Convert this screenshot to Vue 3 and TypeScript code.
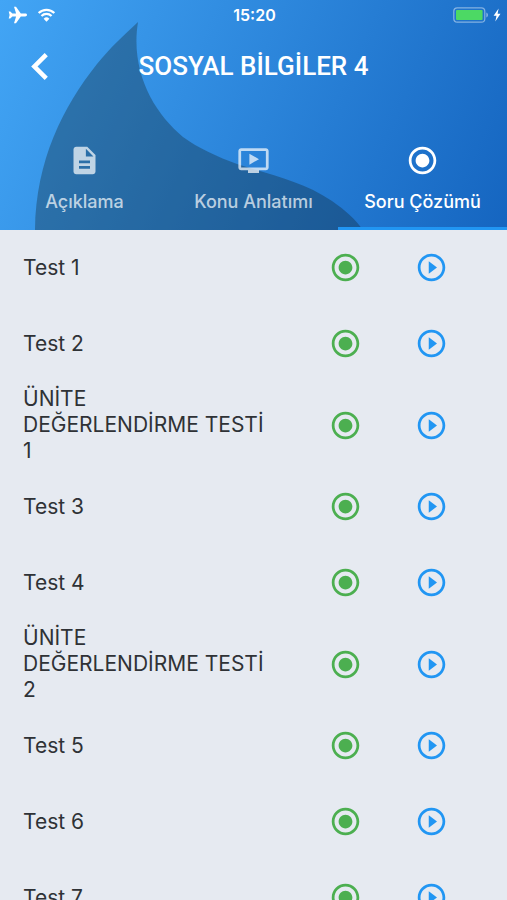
<script setup lang="ts">
import { ref } from 'vue'

interface Tab {
  id: string
  label: string
  icon: string
}

interface Lesson {
  id: number
  title: string
}

const icons = {
  description:
    'M14 2H6c-1.1 0-2 .9-2 2v16c0 1.1.9 2 2 2h12c1.1 0 2-.9 2-2V8l-6-6zm2 16H8v-2h8v2zm0-4H8v-2h8v2zm-3-5V3.5L18.5 9H13z',
  video:
    'M21 3H3c-1.11 0-2 .89-2 2v12c0 1.1.89 2 2 2h5v2h8v-2h5c1.1 0 2-.9 2-2V5c0-1.11-.9-2-2-2zm0 14H3V5h18v12zm-5-6l-7 4V7z',
  target:
    'M12 7c-2.76 0-5 2.24-5 5s2.24 5 5 5 5-2.24 5-5-2.24-5-5-5zm0-5C6.48 2 2 6.48 2 12s4.48 10 10 10 10-4.48 10-10S17.52 2 12 2zm0 18c-4.42 0-8-3.58-8-8s3.58-8 8-8 8 3.58 8 8-3.58 8-8 8z',
  play:
    'M10 16.5l6-4.5-6-4.5v9zM12 2C6.48 2 2 6.48 2 12s4.48 10 10 10 10-4.48 10-10S17.52 2 12 2zm0 18c-4.41 0-8-3.59-8-8s3.59-8 8-8 8 3.59 8 8-3.59 8-8 8z',
}

const tabs: Tab[] = [
  { id: 'description', label: 'Açıklama', icon: icons.description },
  { id: 'lecture', label: 'Konu Anlatımı', icon: icons.video },
  { id: 'questions', label: 'Soru Çözümü', icon: icons.target },
]

const activeTab = ref('questions')

const lessons: Lesson[] = [
  'Test 1',
  'Test 2',
  'ÜNİTE\nDEĞERLENDİRME TESTİ\n1',
  'Test 3',
  'Test 4',
  'ÜNİTE\nDEĞERLENDİRME TESTİ\n2',
  'Test 5',
  'Test 6',
  'Test 7',
].map((title, id) => ({ id, title }))
</script>

<template>
  <div class="app">
    <header class="header">
      <svg class="fin" viewBox="0 0 507 230" preserveAspectRatio="none" aria-hidden="true">
        <path
          d="M138 22C123 36 110 48 97 64C63 107 36 160 35 230H363C355 219 345 210 332 201C302 181 270 175 237 164C218 157 198 148 183 137C154 113 130 72 138 22Z"
        />
      </svg>

      <div class="status">
        <div class="status-side">
          <svg class="plane" viewBox="0 0 20 18" aria-hidden="true">
            <path
              d="M19 9c0-.9-.8-1.4-1.8-1.4h-4.4L8 .7H6l2.1 6.9H4.4L2.3 5.4H.7L1.6 9 .7 12.6h1.6l2.1-2.2h3.7L6 17.3h2l4.8-6.9h4.4c1 0 1.8-.5 1.8-1.4z"
            />
          </svg>
          <svg class="wifi" viewBox="0 0 20 15" aria-hidden="true">
            <path class="arc" d="M1.6 5.4a12 12 0 0 1 16.8 0M4.6 8.5a7.7 7.7 0 0 1 10.8 0" />
            <path d="M10 14.6l3.1-3.2a4.5 4.5 0 0 0-6.2 0z" />
          </svg>
        </div>
        <span class="clock">15:20</span>
        <div class="status-side end">
          <svg class="battery" viewBox="0 0 36 16" aria-hidden="true">
            <rect class="case" x="0.8" y="0.8" width="31" height="14.4" rx="3.5" />
            <rect class="charge" x="3" y="3" width="26.6" height="10" rx="1" />
            <path class="cap" d="M33.4 5.5c2 .8 2 4.2 0 5z" />
          </svg>
          <svg class="bolt" viewBox="0 0 8 14" aria-hidden="true">
            <path d="M5.6.5L.6 7.8h2.9L2.3 13.5l5.2-7.7H4.6z" />
          </svg>
        </div>
      </div>

      <div class="toolbar">
        <button class="back" type="button" aria-label="Geri">
          <svg viewBox="8 6 7.41 12" aria-hidden="true">
            <path d="M15.41 7.41L14 6l-6 6 6 6 1.41-1.41L10.83 12z" />
          </svg>
        </button>
        <h1>SOSYAL BİLGİLER 4</h1>
      </div>

      <div class="tabs" role="tablist">
        <button
          v-for="tab in tabs"
          :key="tab.id"
          class="tab"
          :class="{ active: tab.id === activeTab }"
          type="button"
          role="tab"
          :aria-selected="tab.id === activeTab"
          @click="activeTab = tab.id"
        >
          <svg class="icon" viewBox="0 0 24 24" aria-hidden="true"><path :d="tab.icon" /></svg>
          <span>{{ tab.label }}</span>
        </button>
      </div>
    </header>

    <ul class="list">
      <li v-for="lesson in lessons" :key="lesson.id" class="row">
        <span class="name">{{ lesson.title }}</span>
        <button class="action solve" type="button" aria-label="Testi çöz">
          <svg class="icon" viewBox="0 0 24 24" aria-hidden="true"><path :d="icons.target" /></svg>
        </button>
        <button class="action watch" type="button" aria-label="Videoyu izle">
          <svg class="icon" viewBox="0 0 24 24" aria-hidden="true"><path :d="icons.play" /></svg>
        </button>
      </li>
    </ul>
  </div>
</template>

<style>
body {
  margin: 0;
  background: #e6eaf1;
}
</style>

<style scoped>
.app {
  display: flex;
  flex-direction: column;
  height: 100vh;
  background: #e6eaf1;
  color: #2f3236;
  font-family: Inter, Roboto, sans-serif;
}

button {
  margin: 0;
  padding: 0;
  border: 0;
  background: none;
  color: inherit;
  font: inherit;
  cursor: pointer;
}

svg {
  display: block;
  fill: currentColor;
}

.icon {
  width: 33px;
  height: 33px;
}

.header {
  position: relative;
  flex: none;
  background: linear-gradient(114deg, #42a5f5, #1565c0);
  color: #fff;
}

.fin {
  position: absolute;
  inset: 0;
  width: 100%;
  height: 100%;
  fill: rgba(14, 30, 34, 0.32);
}

.status,
.toolbar,
.tabs {
  position: relative;
}

.status {
  display: grid;
  grid-template-columns: 1fr auto 1fr;
  align-items: center;
  height: 30px;
  padding: 0 6px 0 8px;
}

.status-side {
  display: flex;
  align-items: center;
  gap: 9px;
}

.status-side.end {
  justify-content: flex-end;
  gap: 4px;
}

.plane {
  width: 20px;
  height: 18px;
}

.wifi {
  width: 19px;
  height: 14px;
}

.arc {
  fill: none;
  stroke: currentColor;
  stroke-width: 2.4;
}

.clock {
  font-size: 16px;
  font-weight: 600;
  line-height: 20px;
}

.battery {
  width: 36px;
  height: 16px;
}

.case {
  fill: none;
  stroke: rgba(255, 255, 255, 0.45);
  stroke-width: 1.2;
}

.charge {
  fill: #4cd964;
}

.cap {
  fill: rgba(255, 255, 255, 0.5);
}

.bolt {
  width: 8px;
  height: 14px;
}

.toolbar {
  display: grid;
  grid-template-columns: 78px 1fr 78px;
  align-items: center;
  height: 72px;
}

.back {
  display: grid;
  place-items: center;
  height: 56px;
}

.back svg {
  width: 17px;
  height: 27px;
}

h1 {
  margin: 0;
  font-family: Roboto, Inter, sans-serif;
  font-size: 26px;
  font-weight: 500;
  line-height: 32px;
  text-align: center;
  white-space: nowrap;
}

.tabs {
  display: grid;
  grid-template-columns: repeat(3, 1fr);
  height: 128px;
}

.tab {
  display: flex;
  flex-direction: column;
  align-items: center;
  gap: 12px;
  padding-top: 42px;
  border-bottom: 3px solid transparent;
  color: rgba(255, 255, 255, 0.7);
  font-size: 18px;
  font-weight: 500;
  line-height: 26px;
}

.tab.active {
  border-bottom-color: #2196f3;
  color: #fff;
}

.list {
  flex: 1;
  min-height: 0;
  margin: -1px 0 0;
  padding: 0;
  overflow-y: auto;
  scrollbar-width: none;
  list-style: none;
}

.row {
  display: flex;
  align-items: center;
  box-sizing: border-box;
  min-height: 76px;
  padding: 5px 33px 4px 23px;
}

.name {
  flex: 1;
  font-size: 21px;
  line-height: 26px;
  white-space: pre-line;
}

.action {
  display: grid;
  flex: none;
  place-items: center;
  width: 86px;
  height: 48px;
}

.solve {
  color: #4caf50;
}

.watch {
  color: #2196f3;
}
</style>
